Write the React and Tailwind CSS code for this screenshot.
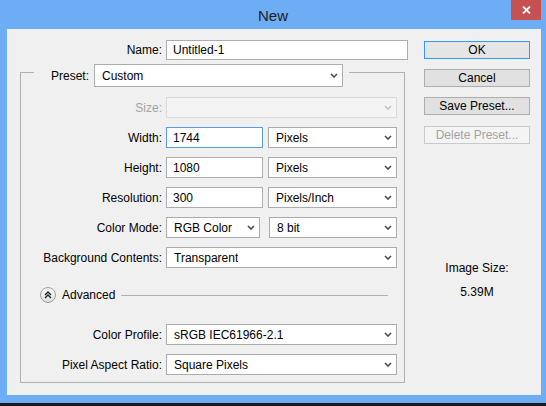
import React from 'react';

const Chevron = ({ disabled }) => (
  <svg width="8" height="5" viewBox="0 0 8 5" className="shrink-0">
    <polyline points="1,1 4,4 7,1" fill="none" stroke={disabled ? '#c4c4c4' : '#4a4a4a'} strokeWidth="1.6" />
  </svg>
);

const Select = ({ value, className = '', disabled }) => (
  <div
    className={`flex h-full items-center justify-between border pl-[7px] pr-[4px] ${
      disabled ? 'border-[#d9d9d9] bg-[#f4f4f4]' : 'border-[#acacac] bg-white'
    } ${className}`}
  >
    <span className="truncate">{value}</span>
    <Chevron disabled={disabled} />
  </div>
);

const Input = ({ value, className = '', focused }) => (
  <div
    className={`flex h-full items-center border bg-white pl-[6px] ${
      focused ? 'border-[#569de5]' : 'border-[#abadb3]'
    } ${className}`}
  >
    {value}
  </div>
);

const Row = ({ label, disabled, className = '', children }) => (
  <div className={`flex h-[21px] items-center ${className}`}>
    <span className={`w-[145px] shrink-0 pr-[4px] text-right ${disabled ? 'text-[#a3a3a3]' : ''}`}>{label}</span>
    <div className="flex h-full w-[231px] justify-between">{children}</div>
  </div>
);

const Button = ({ children, primary, disabled, className = '' }) => (
  <div
    className={`flex h-[18px] items-center justify-center border ${
      primary
        ? 'border-[#3399ff] bg-[#e5e5e5]'
        : disabled
        ? 'border-[#c9c9c9] bg-[#f4f4f4] text-[#a3a3a3]'
        : 'border-[#adadad] bg-[#e1e1e1]'
    } ${className}`}
  >
    {children}
  </div>
);

export default function App() {
  return (
    <div className="h-[406px] w-[546px] bg-[#1c1c1c] text-[12px] text-black" style={{ fontFamily: '"Liberation Sans", Arial, sans-serif' }}>
      <div className="flex h-[403px] flex-col bg-[#6cadf5]">
        {/* title bar */}
        <div className="grid h-[29px] shrink-0 grid-cols-[1fr_auto_1fr]">
          <div />
          <div className="pt-[5px] text-[15px] text-[#202020]">New</div>
          <div className="flex justify-end pr-[5px]">
            <div className="flex h-[20px] w-[30px] items-center justify-center bg-[#c75050]">
              <svg width="9" height="8" viewBox="0 0 9 8">
                <path d="M1 0.5 L8 7.5 M8 0.5 L1 7.5" stroke="white" strokeWidth="1.8" />
              </svg>
            </div>
          </div>
        </div>

        {/* client */}
        <div className="flex flex-1 pb-[8px] pl-[7px] pr-[5px]">
          <div className="flex flex-1 bg-[#f0f0f0]">
            {/* left column */}
            <div className="w-[401px] shrink-0 pt-[11px]">
              <div className="flex h-[20px] items-center">
                <span className="w-[159px] shrink-0 pr-[4px] text-right">Name:</span>
                <Input value="Untitled-1" className="w-[242px]" />
              </div>

              <div className="ml-[13px] mt-[12px] h-[311px] w-[385px] border border-[#b0b0b0]">
                <div className="-mt-[9px] ml-[13px] flex h-[23px] w-fit items-center bg-[#f0f0f0] pr-[6px]">
                  <span className="w-[55px] text-right">Preset:</span>
                  <div className="ml-[5px] h-full w-[249px]">
                    <Select value="Custom" />
                  </div>
                </div>

                <Row label="Size:" disabled className="mt-[10px]">
                  <Select value="" disabled className="w-full" />
                </Row>
                <Row label="Width:" className="mt-[9px]">
                  <Input value="1744" focused className="w-[97px]" />
                  <Select value="Pixels" className="w-[129px]" />
                </Row>
                <Row label="Height:" className="mt-[9px]">
                  <Input value="1080" className="w-[97px]" />
                  <Select value="Pixels" className="w-[129px]" />
                </Row>
                <Row label="Resolution:" className="mt-[9px]">
                  <Input value="300" className="w-[97px]" />
                  <Select value="Pixels/Inch" className="w-[129px]" />
                </Row>
                <Row label="Color Mode:" className="mt-[9px]">
                  <Select value="RGB Color" className="w-[94px]" />
                  <Select value="8 bit" className="w-[128px]" />
                </Row>
                <Row label="Background Contents:" className="mt-[9px]">
                  <Select value="Transparent" className="w-full" />
                </Row>

                <div className="ml-[19px] mr-[16px] mt-[19px] flex h-[16px] items-center">
                  <div className="flex h-[16px] w-[16px] items-center justify-center rounded-full border border-[#9c9c9c] bg-gradient-to-b from-white to-[#dedede]">
                    <svg width="8" height="8" viewBox="0 0 8 8">
                      <path d="M1 4 L4 1 L7 4 M1 7 L4 4 L7 7" fill="none" stroke="#222" strokeWidth="1.4" />
                    </svg>
                  </div>
                  <span className="ml-[6px]">Advanced</span>
                  <div className="ml-[6px] h-px flex-1 bg-[#b0b0b0]" />
                </div>

                <Row label="Color Profile:" className="mt-[21px]">
                  <Select value="sRGB IEC61966-2.1" className="w-full" />
                </Row>
                <Row label="Pixel Aspect Ratio:" className="mt-[9px]">
                  <Select value="Square Pixels" className="w-full" />
                </Row>
              </div>
            </div>

            {/* right column */}
            <div className="ml-[16px] flex w-[106px] shrink-0 flex-col pt-[12px]">
              <Button primary>OK</Button>
              <Button className="mt-[10px]">Cancel</Button>
              <Button className="mt-[10px]">Save Preset...</Button>
              <Button disabled className="mt-[11px]">Delete Preset...</Button>
              <div className="mt-[117px] text-center leading-[14px]">Image Size:</div>
              <div className="mt-[10px] text-center leading-[14px]">5.39M</div>
            </div>
          </div>
        </div>
      </div>
    </div>
  );
}
